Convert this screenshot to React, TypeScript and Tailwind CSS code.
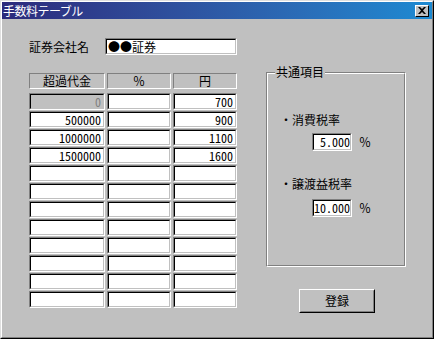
import React from "react";

const jp = "font-['Noto_Sans_CJK_JP','Noto_Sans',sans-serif]";
const mono = "font-['Noto_Sans_Mono_CJK_JP','DejaVu_Sans_Mono',monospace]";

function Sunken({
  className,
  inner,
  children,
}: {
  className: string;
  inner: string;
  children?: React.ReactNode;
}) {
  return (
    <div
      className={`${className} border border-t-[#808080] border-l-[#808080] border-b-white border-r-white`}
    >
      <div
        className={`h-full w-full border border-t-black border-l-black border-b-[#c0c0c0] border-r-[#c0c0c0] ${inner}`}
      >
        {children}
      </div>
    </div>
  );
}

function NumCell({
  w,
  value,
  disabled,
}: {
  w: string;
  value?: string;
  disabled?: boolean;
}) {
  return (
    <Sunken
      className={`h-[17px] ${w}`}
      inner={`flex items-center justify-end pr-[2px] text-[12px] leading-none ${mono} ${
        disabled ? "bg-[#c0c0c0] text-[#808080]" : "bg-white text-black"
      }`}
    >
      {value}
    </Sunken>
  );
}

function Header({ w, label }: { w: string; label: string }) {
  return (
    <div
      className={`${w} h-[16px] border border-t-[#808080] border-l-[#808080] border-b-white border-r-white flex items-center justify-center text-[12px] leading-none text-black`}
    >
      {label}
    </div>
  );
}

const rows: [string, string, string, boolean][] = [
  ["0", "", "700", true],
  ["500000", "", "900", false],
  ["1000000", "", "1100", false],
  ["1500000", "", "1600", false],
  ["", "", "", false],
  ["", "", "", false],
  ["", "", "", false],
  ["", "", "", false],
  ["", "", "", false],
  ["", "", "", false],
  ["", "", "", false],
  ["", "", "", false],
];

export default function App() {
  return (
    <div
      className={`w-[434px] h-[339px] bg-[#c0c0c0] border border-t-[#dfdfdf] border-l-[#dfdfdf] border-b-black border-r-black ${jp}`}
    >
      <div className="h-full flex flex-col border border-t-white border-l-white border-b-[#808080] border-r-[#808080]">
        {/* Title bar */}
        <div className="h-[17px] flex items-center justify-between bg-gradient-to-r from-[#2c2a7c] to-[#1c8ad2] pl-[1px] pr-[3px]">
          <span className="text-white text-[12px] leading-none tracking-[-0.5px]">手数料テーブル</span>
          <div className="w-[14px] h-[12px] bg-[#c0c0c0] border border-t-white border-l-white border-b-black border-r-black flex items-center justify-center">
            <svg width="8" height="7" viewBox="0 0 8 7">
              <path d="M0 0h2l2 2 2-2h2L5 3.5 8 7H6L4 5 2 7H0l3-3.5z" fill="black" />
            </svg>
          </div>
        </div>

        {/* Body */}
        <div className="flex-1 flex">
          {/* Left column */}
          <div className="ml-[27px] flex flex-col">
            <div className="mt-[19px] flex items-center h-[17px]">
              <span className="w-[76px] text-[12px] leading-none text-black">証券会社名</span>
              <Sunken
                className="w-[132px] h-[17px]"
                inner="bg-white flex items-center pl-[1px] text-[12px] leading-none text-black"
              >
                ●●証券
              </Sunken>
            </div>

            <div className="mt-[18px] flex gap-[2px]">
              <Header w="w-[76px]" label="超過代金" />
              <Header w="w-[64px]" label="％" />
              <Header w="w-[64px]" label="円" />
            </div>

            <div className="mt-[4px] flex flex-col gap-[1px]">
              {rows.map((r, i) => (
                <div key={i} className="flex gap-[2px]">
                  <NumCell w="w-[76px]" value={r[0]} disabled={r[3]} />
                  <NumCell w="w-[64px]" value={r[1]} />
                  <NumCell w="w-[64px]" value={r[2]} />
                </div>
              ))}
            </div>
          </div>

          {/* Right column */}
          <div className="ml-[29px] flex flex-col">
            <div className="relative mt-[53px] w-[140px] h-[195px] border border-t-[#808080] border-l-[#808080] border-b-white border-r-white">
              <div className="h-full w-full border border-t-white border-l-white border-b-[#808080] border-r-[#808080] flex flex-col pl-[12px]">
                <span className="mt-[40px] h-[12px] text-[12px] leading-none text-black">・消費税率</span>
                <div className="mt-[7px] ml-[32px] flex items-center">
                  <Sunken
                    className="w-[40px] h-[18px]"
                    inner={`bg-white flex items-center justify-end text-[12px] leading-none text-black ${mono}`}
                  >
                    5.000
                  </Sunken>
                  <span className="ml-[7px] text-[12px] leading-none text-black">％</span>
                </div>
                <span className="mt-[27px] h-[12px] text-[12px] leading-none text-black">・譲渡益税率</span>
                <div className="mt-[9px] ml-[32px] flex items-center">
                  <Sunken
                    className="w-[40px] h-[18px]"
                    inner={`bg-white flex items-center justify-end text-[12px] leading-none text-black ${mono}`}
                  >
                    10.000
                  </Sunken>
                  <span className="ml-[7px] text-[12px] leading-none text-black">％</span>
                </div>
              </div>
              <span className="absolute top-[-7px] left-[8px] px-[1px] bg-[#c0c0c0] text-[12px] leading-none text-black">
                共通項目
              </span>
            </div>

            <button className="mt-[22px] ml-[33px] w-[76px] h-[24px] bg-[#c0c0c0] border border-t-white border-l-white border-b-black border-r-black p-0">
              <div className="h-full w-full border border-t-[#c0c0c0] border-l-[#c0c0c0] border-b-[#808080] border-r-[#808080] flex items-center justify-center text-[12px] leading-none text-black">
                登録
              </div>
            </button>
          </div>
        </div>
      </div>
    </div>
  );
}
